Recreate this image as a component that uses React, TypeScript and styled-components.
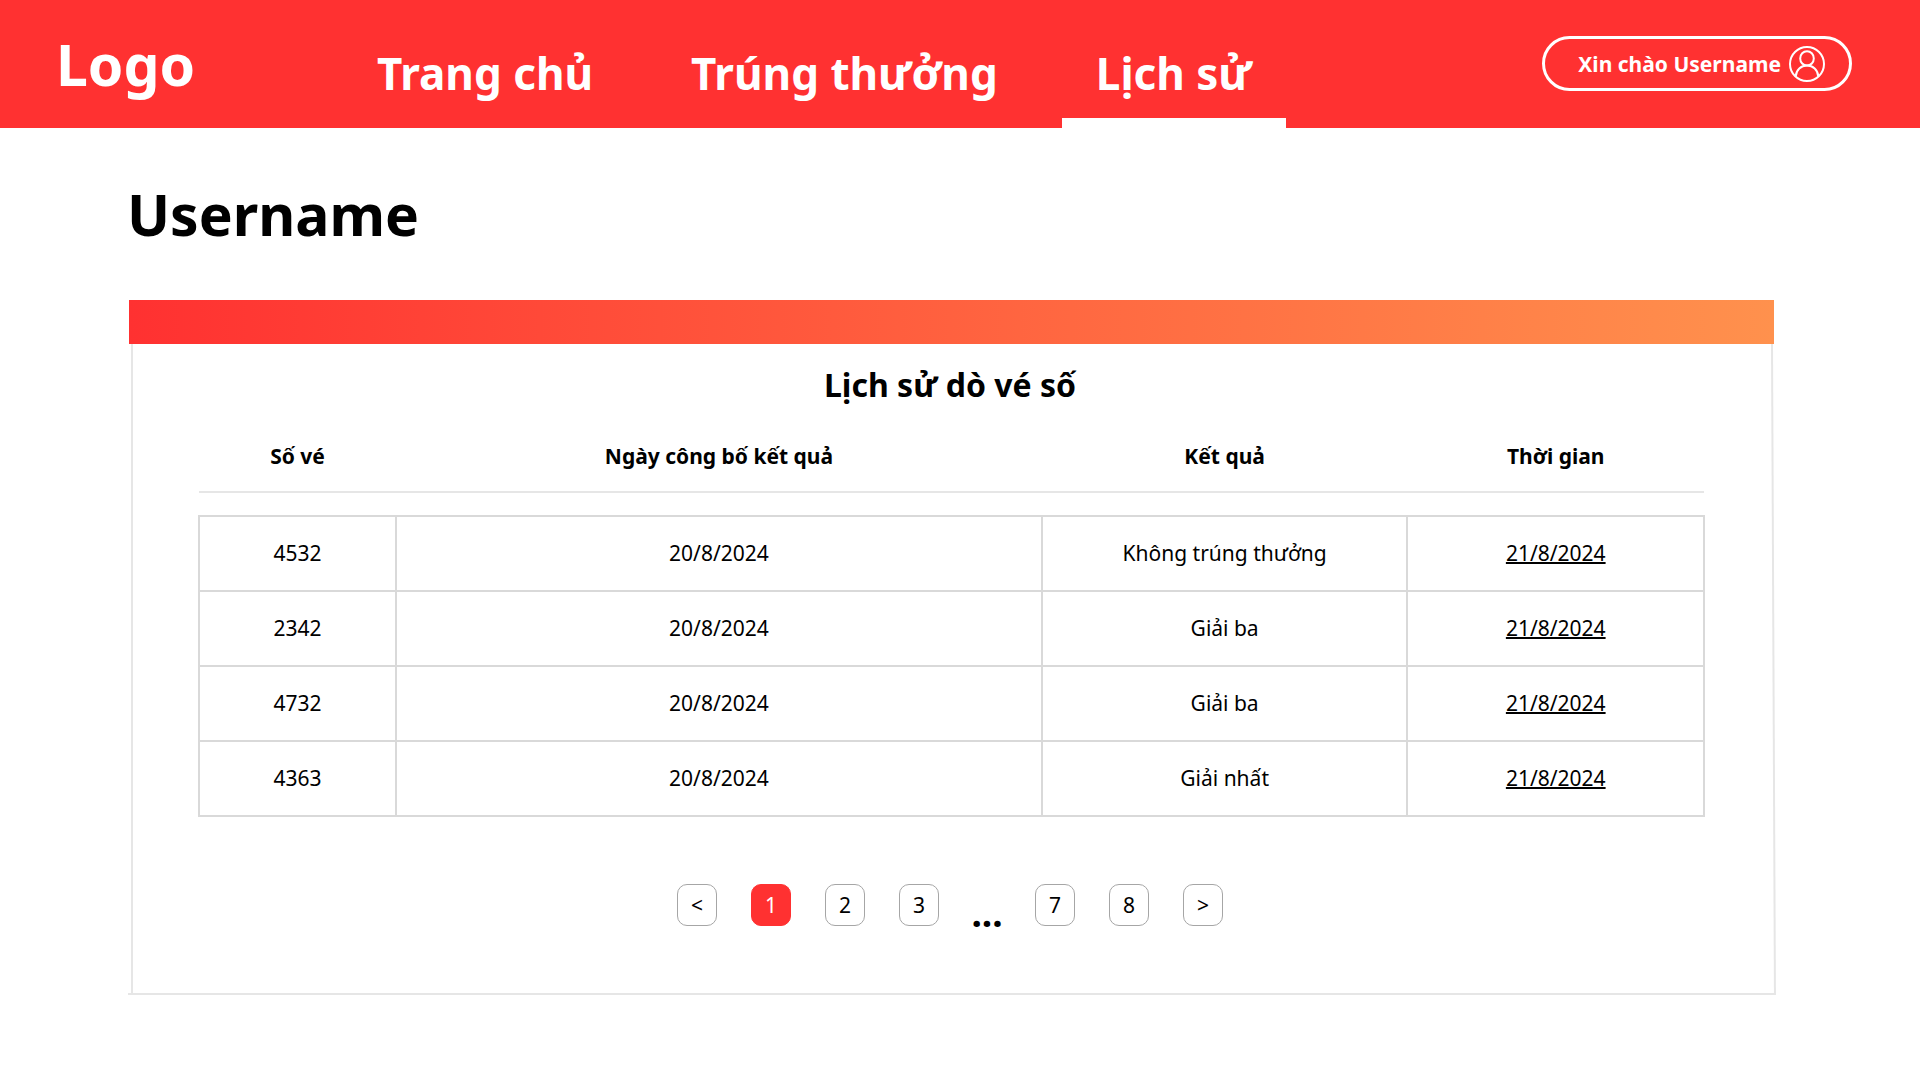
import React from "react";
import styled, { createGlobalStyle } from "styled-components";

const RED = "#ff3131";
const LINE = "#e6e6e6";
const CELL_LINE = "#d9d9d9";

const GlobalStyle = createGlobalStyle`
  *, *::before, *::after { box-sizing: border-box; }
  body {
    margin: 0;
    background: #fff;
    color: #000;
    font-family: "Noto Sans", "Open Sans", sans-serif;
    font-size: 21px;
    line-height: 28px;
  }
`;

const Header = styled.header`
  display: flex;
  align-items: stretch;
  height: 128px;
  padding: 0 68px 0 56px;
  background: ${RED};
  color: #fff;
`;

const Logo = styled.a`
  flex: 0 0 287px;
  padding-top: 24px;
  color: inherit;
  font-size: 57px;
  font-weight: 700;
  line-height: 80px;
  text-decoration: none;
`;

const Nav = styled.nav`
  display: flex;
  gap: 30px;
`;

const NavLink = styled.a<{ $active?: boolean }>`
  padding: 43px 34px 0;
  border-bottom: 10px solid ${(p) => (p.$active ? "#fff" : "transparent")};
  color: inherit;
  font-size: 44px;
  font-weight: 700;
  line-height: 60px;
  text-decoration: none;
  white-space: nowrap;
`;

const UserButton = styled.button`
  display: flex;
  align-items: center;
  justify-content: flex-end;
  gap: 8px;
  height: 55px;
  margin: 36px 0 0 auto;
  padding: 0 24px 0 33px;
  border: 3px solid #fff;
  border-radius: 28px;
  background: transparent;
  color: inherit;
  font: inherit;
  font-weight: 700;
  white-space: nowrap;
  cursor: pointer;
`;

const Main = styled.main`
  padding: 46px 146px 80px 129px;
`;

const PageTitle = styled.h1`
  margin: 0 0 46px;
  font-size: 57px;
  font-weight: 700;
  line-height: 80px;
  text-indent: -2px;
`;

const CardBar = styled.div`
  height: 44px;
  background: linear-gradient(90deg, ${RED}, #ff914d);
`;

/* The frame is drawn by hand-ruled lines: the right one leans outwards
   and the bottom one overshoots both corners. */
const Card = styled.section`
  position: relative;
  margin: 0 0 0 2px;
  padding: 19px 69px 69px 62px;
  border-left: 2px solid ${LINE};

  &::before {
    content: "";
    position: absolute;
    top: 0;
    right: 1px;
    bottom: 0;
    width: 2px;
    background: ${LINE};
    transform: skewX(0.26deg);
    transform-origin: top;
  }

  &::after {
    content: "";
    position: absolute;
    right: -2px;
    bottom: 0;
    left: -5px;
    height: 2px;
    background: ${LINE};
  }
`;

const CardTitle = styled.h2`
  margin: 0 0 28px;
  font-size: 32px;
  font-weight: 700;
  line-height: 44px;
  text-align: center;
`;

const TableArea = styled.div`
  padding-left: 3px;
`;

const Table = styled.table`
  width: 100%;
  border-collapse: collapse;
  table-layout: fixed;
  text-align: center;
`;

const Col = styled.col<{ $width: string }>`
  width: ${(p) => p.$width};
`;

const HeadCell = styled.th`
  height: 57px;
  padding: 0 0 14px;
  border-bottom: 2px solid ${LINE};
  font-weight: 700;
`;

const SpacerCell = styled.td`
  height: 24px;
  padding: 0;
`;

const Cell = styled.td`
  height: 75px;
  padding: 0 0 2px;
  border: 2px solid ${CELL_LINE};
`;

const DateLink = styled.a`
  color: inherit;
  text-decoration: underline;
  text-decoration-thickness: 2px;
`;

const Pagination = styled.nav`
  display: flex;
  align-items: flex-end;
  justify-content: center;
  gap: 34px;
  margin-top: 67px;
`;

const PageButton = styled.button<{ $active?: boolean }>`
  width: 40px;
  height: 42px;
  padding: 0;
  border: 1px solid ${(p) => (p.$active ? RED : "#a6a6a6")};
  border-radius: 10px;
  background: ${(p) => (p.$active ? RED : "#fff")};
  color: ${(p) => (p.$active ? "#fff" : "#000")};
  font: inherit;
  cursor: pointer;
`;

const Ellipsis = styled.span`
  width: 28px;
  display: flex;
  justify-content: center;
  font-size: 37px;
  font-weight: 700;
  line-height: 26px;
`;

const UserIcon = () => (
  <svg width="36" height="36" viewBox="0 0 36 36" fill="none" stroke="#fff" strokeWidth="2" aria-hidden="true">
    <circle cx="18" cy="18" r="17" />
    <ellipse cx="18" cy="12.4" rx="6.8" ry="7.2" />
    <path d="M6.8 30.2C7.2 24 12 19.6 18 19.6S28.8 24 29.2 30.2" />
  </svg>
);

const columns = [
  { label: "Số vé", width: "13.1%" },
  { label: "Ngày công bố kết quả", width: "42.9%" },
  { label: "Kết quả", width: "24.3%" },
  { label: "Thời gian", width: "19.7%" },
];

const tickets = [
  { number: "4532", drawn: "20/8/2024", result: "Không trúng thưởng", checked: "21/8/2024" },
  { number: "2342", drawn: "20/8/2024", result: "Giải ba", checked: "21/8/2024" },
  { number: "4732", drawn: "20/8/2024", result: "Giải ba", checked: "21/8/2024" },
  { number: "4363", drawn: "20/8/2024", result: "Giải nhất", checked: "21/8/2024" },
];

export default function App() {
  return (
    <>
      <GlobalStyle />
      <Header>
        <Logo href="#">Logo</Logo>
        <Nav>
          <NavLink href="#">Trang chủ</NavLink>
          <NavLink href="#">Trúng thưởng</NavLink>
          <NavLink href="#" $active aria-current="page">Lịch sử</NavLink>
        </Nav>
        <UserButton type="button">
          Xin chào Username
          <UserIcon />
        </UserButton>
      </Header>
      <Main>
        <PageTitle>Username</PageTitle>
        <CardBar />
        <Card>
          <CardTitle>Lịch sử dò vé số</CardTitle>
          <TableArea>
            <Table>
              <colgroup>
                {columns.map((c) => (
                  <Col key={c.label} $width={c.width} />
                ))}
              </colgroup>
              <thead>
                <tr>
                  {columns.map((c) => (
                    <HeadCell key={c.label} scope="col">{c.label}</HeadCell>
                  ))}
                </tr>
              </thead>
              <tbody>
                <tr aria-hidden="true">
                  <SpacerCell colSpan={4} />
                </tr>
                {tickets.map((t) => (
                  <tr key={t.number}>
                    <Cell>{t.number}</Cell>
                    <Cell>{t.drawn}</Cell>
                    <Cell>{t.result}</Cell>
                    <Cell>
                      <DateLink href="#">{t.checked}</DateLink>
                    </Cell>
                  </tr>
                ))}
              </tbody>
            </Table>
          </TableArea>
          <Pagination aria-label="Phân trang">
            <PageButton type="button">&lt;</PageButton>
            <PageButton type="button" $active aria-current="page">1</PageButton>
            <PageButton type="button">2</PageButton>
            <PageButton type="button">3</PageButton>
            <Ellipsis>...</Ellipsis>
            <PageButton type="button">7</PageButton>
            <PageButton type="button">8</PageButton>
            <PageButton type="button">&gt;</PageButton>
          </Pagination>
        </Card>
      </Main>
    </>
  );
}
